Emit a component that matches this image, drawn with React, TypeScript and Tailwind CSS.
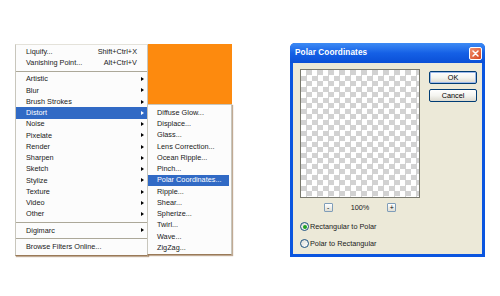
import type { ReactNode } from "react";

const font = "font-['Liberation_Sans',Arial,sans-serif]";

const Arrow = ({ white }: { white?: boolean }) => (
	<span
		className={`block w-0 h-0 border-y-[2.5px] border-y-transparent border-l-[3px] ${white ? "border-l-white" : "border-l-black"}`}
	/>
);

type ItemProps = { label: string; shortcut?: string; sub?: boolean; active?: boolean };

const MenuItem = ({ label, shortcut, sub, active }: ItemProps) => (
	<div className={`flex items-center h-[11.25px] pl-[10px] ${active ? "bg-[#316AC5] text-white" : "text-[#1a1a1a]"}`}>
		<span className="flex-1 whitespace-nowrap">{label}</span>
		{shortcut && <span className="whitespace-nowrap">{shortcut}</span>}
		<span className="w-[10px] flex justify-center">{sub && <Arrow white={active} />}</span>
	</div>
);

const Sep = () => (
	<div className="h-[5px] flex items-center">
		<div className="h-px w-full bg-[#ACA899]" />
	</div>
);

const SubItem = ({ label, active }: { label: string; active?: boolean }) => (
	<div
		className={`flex items-center h-[11.25px] pl-[9px] whitespace-nowrap ${active ? "bg-[#316AC5] text-white" : "text-[#1a1a1a]"}`}
	>
		{label}
	</div>
);

const Radio = ({ checked, children }: { checked?: boolean; children: ReactNode }) => (
	<div className="flex items-center gap-[1px]">
		<span className="w-[9px] h-[9px] rounded-full border border-[#1C5180] bg-gradient-to-br from-[#dcdcd6] to-white flex items-center justify-center">
			{checked && <span className="w-[4px] h-[4px] rounded-full bg-[#21A121]" />}
		</span>
		<span className="whitespace-nowrap">{children}</span>
	</div>
);

const XPButton = ({ children, focused }: { children: ReactNode; focused?: boolean }) => (
	<div
		className={`w-[48px] h-[13px] rounded-[2px] border border-[#003C74] bg-gradient-to-b from-white via-[#f4f4f0] to-[#dcdad0] flex items-center justify-center text-black ${focused ? "shadow-[inset_0_0_0_1px_#9DB9EB]" : ""}`}
	>
		{children}
	</div>
);

const ZoomBtn = ({ children }: { children: ReactNode }) => (
	<span className="w-[9px] h-[9px] border border-[#7F9DB9] rounded-[1px] bg-gradient-to-b from-white to-[#e0ded4] flex items-center justify-center text-[7px] leading-none text-black">
		{children}
	</span>
);

export default function App() {
	const filters = ["Artistic", "Blur", "Brush Strokes"];
	const filters2 = ["Noise", "Pixelate", "Render", "Sharpen", "Sketch", "Stylize", "Texture", "Video", "Other"];
	const distort = [
		"Diffuse Glow...",
		"Displace...",
		"Glass...",
		"Lens Correction...",
		"Ocean Ripple...",
		"Pinch...",
		"Polar Coordinates...",
		"Ripple...",
		"Shear...",
		"Spherize...",
		"Twirl...",
		"Wave...",
		"ZigZag...",
	];

	return (
		<div className={`w-[500px] h-[296px] bg-white flex items-start pl-[15px] pt-[43px] text-[7.3px] leading-none ${font}`}>
			{/* filter menu */}
			<div className="mt-px w-[133px] h-[212px] bg-[#FCFCFC] border border-[#C8C6BC] border-t-[#E4E2DA] border-b-[#9A7A58] shadow-[1px_1px_1px_rgba(140,100,60,0.55)] pt-px">
				<MenuItem label="Liquify..." shortcut="Shift+Ctrl+X" />
				<MenuItem label="Vanishing Point..." shortcut="Alt+Ctrl+V" />
				<Sep />
				{filters.map((f) => (
					<MenuItem key={f} label={f} sub />
				))}
				<MenuItem label="Distort" sub active />
				{filters2.map((f) => (
					<MenuItem key={f} label={f} sub />
				))}
				<Sep />
				<MenuItem label="Digimarc" sub />
				<Sep />
				<MenuItem label="Browse Filters Online..." />
			</div>

			{/* orange swatch + distort submenu */}
			<div className="mt-px w-[85px] -ml-px flex flex-col">
				<div className="ml-px h-[60px] bg-[#FD8A0E]" />
				<div className="h-[151px] bg-[#FCFCFC] border border-[#C8C6BC] border-b-[#9A7A58] shadow-[1px_1px_1px_rgba(140,100,60,0.55)] pt-[2px] pr-[2px]">
					{distort.map((d) => (
						<SubItem key={d} label={d} active={d === "Polar Coordinates..."} />
					))}
				</div>
			</div>

			{/* dialog */}
			<div className="ml-[58px] w-[195px] h-[214px] rounded-t-[5px] bg-[#0A55DF] flex flex-col">
				<div className="h-[20px] rounded-t-[5px] bg-gradient-to-b from-[#3E8BF4] via-[#1560E6] to-[#0A4FD6] flex items-center pl-[5px] pr-[3px]">
					<span className="flex-1 text-white font-bold text-[8.2px] tracking-[0.1px]">Polar Coordinates</span>
					<span className="w-[13px] h-[13px] rounded-[2px] border border-white bg-gradient-to-br from-[#F0906E] to-[#D6431C] flex items-center justify-center">
						<svg width="7" height="7" viewBox="0 0 7 7">
							<path d="M1 1L6 6M6 1L1 6" stroke="white" strokeWidth="1.5" strokeLinecap="round" />
						</svg>
					</span>
				</div>
				<div className="flex-1 mx-[3px] mb-[3px] bg-[#ECE9D8] flex pl-[7px] pt-[6px] pr-[5px] text-[#1a1a1a]">
					<div className="flex flex-col">
						<div className="w-[120px] h-[129px] border border-[#7A7A6E] bg-[conic-gradient(#d2d2d2_25%,#fff_0_50%,#d2d2d2_0_75%,#fff_0)] bg-[length:11px_11px]" />
						<div className="mt-[5px] flex items-center justify-center gap-[18px]">
							<ZoomBtn>-</ZoomBtn>
							<span>100%</span>
							<ZoomBtn>+</ZoomBtn>
						</div>
						<div className="mt-[10px] flex flex-col gap-[8px]">
							<Radio checked>Rectangular to Polar</Radio>
							<Radio>Polar to Rectangular</Radio>
						</div>
					</div>
					<div className="ml-auto flex flex-col gap-[5px] pt-[2px]">
						<XPButton focused>OK</XPButton>
						<XPButton>Cancel</XPButton>
					</div>
				</div>
			</div>
		</div>
	);
}
